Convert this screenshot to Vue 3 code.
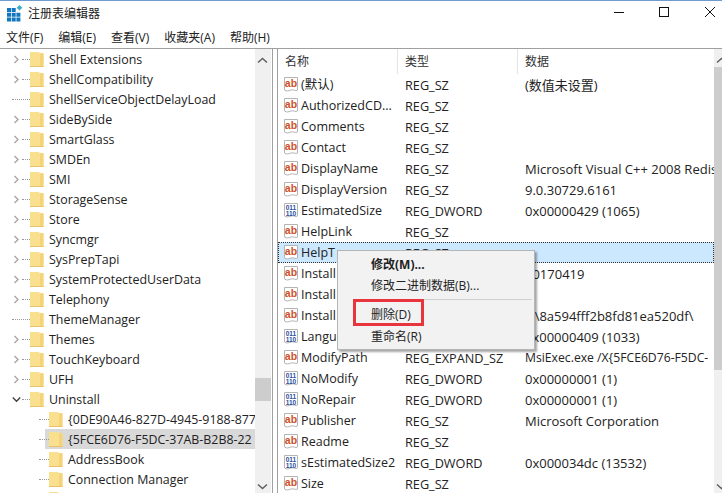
<script setup>
const menus = ['文件(F)', '编辑(E)', '查看(V)', '收藏夹(A)', '帮助(H)']
const tree = [
  { n: 'Shell Extensions', a: 'r' }, { n: 'ShellCompatibility', a: 'r' }, { n: 'ShellServiceObjectDelayLoad' },
  { n: 'SideBySide', a: 'r' }, { n: 'SmartGlass', a: 'r' }, { n: 'SMDEn', a: 'r' }, { n: 'SMI', a: 'r' },
  { n: 'StorageSense', a: 'r' }, { n: 'Store', a: 'r' }, { n: 'Syncmgr', a: 'r' }, { n: 'SysPrepTapi', a: 'r' },
  { n: 'SystemProtectedUserData', a: 'r' }, { n: 'Telephony', a: 'r' }, { n: 'ThemeManager' }, { n: 'Themes', a: 'r' },
  { n: 'TouchKeyboard', a: 'r' }, { n: 'UFH', a: 'r' }, { n: 'Uninstall', a: 'd' },
  { n: '{0DE90A46-827D-4945-9188-877', c: 1 }, { n: '{5FCE6D76-F5DC-37AB-B2B8-22', c: 1, sel: 1 },
  { n: 'AddressBook', c: 1 }, { n: 'Connection Manager', c: 1 }, { n: '', c: 1 }
]
const rows = [
  ['s', '(默认)', 'REG_SZ', '(数值未设置)'], ['s', 'AuthorizedCD...', 'REG_SZ', ''], ['s', 'Comments', 'REG_SZ', ''],
  ['s', 'Contact', 'REG_SZ', ''], ['s', 'DisplayName', 'REG_SZ', 'Microsoft Visual C++ 2008 Redis'],
  ['s', 'DisplayVersion', 'REG_SZ', '9.0.30729.6161'], ['b', 'EstimatedSize', 'REG_DWORD', '0x00000429 (1065)'],
  ['s', 'HelpLink', 'REG_SZ', ''], ['s', 'HelpT', 'REG_SZ', '', 1], ['s', 'Install', 'REG_SZ', '20170419'],
  ['s', 'Install', 'REG_SZ', ''], ['s', 'Install', 'REG_SZ', 'c:\\8a594fff2b8fd81ea520df\\'],
  ['b', 'Langu', 'REG_DWORD', '0x00000409 (1033)'], ['s', 'ModifyPath', 'REG_EXPAND_SZ', 'MsiExec.exe /X{5FCE6D76-F5DC-', 0, 1],
  ['b', 'NoModify', 'REG_DWORD', '0x00000001 (1)'], ['b', 'NoRepair', 'REG_DWORD', '0x00000001 (1)'],
  ['s', 'Publisher', 'REG_SZ', 'Microsoft Corporation'], ['s', 'Readme', 'REG_SZ', ''],
  ['b', 'sEstimatedSize2', 'REG_DWORD', '0x000034dc (13532)'], ['s', 'Size', 'REG_SZ', '']
]
</script>

<template>
  <div class="win">
    <header class="title">
      <svg class="logo" width="16" height="18" viewBox="0 0 16 18">
        <path d="M0 4h4v4H0zM4.700 4h4v4h-4zM0 8.700h4v4H0zM4.700 8.700h4v4h-4zM0 13.400h4v4H0zM4.700 13.400h4v4h-4zM9.400 8.700h4v4h-4zM9.400 13.400h4v4h-4z" fill="#1177c0" />
        <path d="M12.500 1l2.800 2.800-2.800 2.800-2.800-2.800z" fill="#3fa9c9" />
      </svg>
      <span class="title-text">注册表编辑器</span>
      <div class="caption">
        <svg width="12" height="12" viewBox="0 0 12 12"><path d="M1 6.500h10" stroke="#111" fill="none" /></svg>
        <svg width="12" height="12" viewBox="0 0 12 12"><rect x="1.500" y="1.500" width="9" height="9" stroke="#111" fill="none" /></svg>
        <svg width="12" height="12" viewBox="0 0 12 12"><path d="M1 1l10 10M11 1L1 11" stroke="#111" fill="none" /></svg>
      </div>
    </header>
    <nav class="menu"><span v-for="m in menus" :key="m">{{ m }}</span></nav>
    <div class="panes">
      <aside class="tree-pane">
        <div class="tree">
          <div v-for="(t, i) in tree" :key="i" class="node" :class="{ child: t.c, sel: t.sel }">
            <svg v-if="t.a" class="arrow" width="9" height="9" viewBox="0 0 9 9">
              <path v-if="t.a === 'r'" d="M2.500 1l3.500 3.500L2.500 8" stroke="#a6a6a6" stroke-width="1.400" fill="none" />
              <path v-else d="M.8 2.500l3.700 3.700 3.700-3.700" stroke="#404040" stroke-width="1.400" fill="none" />
            </svg>
            <span class="dots" :class="{ full: !t.a }"></span>
            <svg class="folder" width="14" height="17" viewBox="0 0 14 17">
              <path d="M0 1h9l.8 1.200H13.500V16H0z" fill="#f9e08e" />
              <path d="M10 2.200h3.500V16H10z" fill="#f6d278" />
              <path d="M0 15.500h13.500" stroke="#e9c26a" />
            </svg>
            <span class="name">{{ t.n }}</span>
          </div>
        </div>
        <div class="vbar wide">
          <svg class="up" width="11" height="7" viewBox="0 0 11 7"><path d="M1 5.500l4.500-4 4.500 4" stroke="#606060" stroke-width="1.500" fill="none" /></svg>
          <span class="thumb"></span>
          <svg class="down" width="11" height="7" viewBox="0 0 11 7"><path d="M1 1.500l4.500 4 4.500-4" stroke="#606060" stroke-width="1.500" fill="none" /></svg>
        </div>
      </aside>
      <section class="list-pane">
        <div class="list">
          <div class="head"><span class="c1">名称</span><span class="c2">类型</span><span class="c3">数据</span></div>
          <div v-for="(r, i) in rows" :key="i" class="row" :class="{ focus: r[4] }">
            <svg v-if="r[0] === 's'" class="ico" width="16" height="17" viewBox="0 0 16 17">
              <path d="M1.500 1.500h13v12.500c-2 1.500-4-1-6.500 0s-4.500 1.500-6.500 0z" fill="#fff" stroke="#b4b4b4" />
              <text x="8" y="10.500" text-anchor="middle" class="ab">ab</text>
            </svg>
            <svg v-else class="ico" width="16" height="17" viewBox="0 0 16 17">
              <path d="M1.500 1.500h13v12.500c-2 1.500-4-1-6.500 0s-4.500 1.500-6.500 0z" fill="#fff" stroke="#b4b4b4" />
              <text x="8" y="7.500" text-anchor="middle" class="bin">011</text>
              <text x="8" y="13.500" text-anchor="middle" class="bin">110</text>
            </svg>
            <span class="n">{{ r[1] }}</span><span class="t">{{ r[2] }}</span><span class="d" :class="{ tight: r[5] }">{{ r[3] }}</span>
          </div>
        </div>
        <div class="vbar narrow">
          <svg class="up" width="11" height="7" viewBox="0 0 11 7"><path d="M1 5.500l4.500-4 4.500 4" stroke="#606060" stroke-width="1.500" fill="none" /></svg>
          <span class="thumb"></span>
          <svg class="down" width="11" height="7" viewBox="0 0 11 7"><path d="M1 1.500l4.500 4 4.500-4" stroke="#606060" stroke-width="1.500" fill="none" /></svg>
        </div>
        <div class="ctx">
          <div class="item strong">修改(M)...</div>
          <div class="item">修改二进制数据(B)...</div>
          <div class="sep"></div>
          <div class="item del">删除(D)</div>
          <div class="item">重命名(R)</div>
        </div>
      </section>
    </div>
  </div>
</template>

<style>
html, body { margin: 0; background: #fff; }
</style>

<style scoped>
.win { width: 722px; height: 493px; overflow: hidden; display: flex; flex-direction: column; background: #fff; color: #222; font: 13px/20px "Open Sans", "Noto Sans CJK SC", sans-serif; position: relative; }
.title { height: 27px; flex: none; border-top: 1px solid #6f9bcf; display: flex; align-items: center; padding-left: 7px; }
.logo { margin-right: 5px; margin-top: -3px; }
.title-text { font-size: 12px; color: #222; margin-top: -1px; }
.caption { margin-left: auto; display: flex; gap: 33px; padding-right: 6px; margin-top: -5px; }
.caption svg:last-child { margin-left: 1px; }
.menu { height: 20px; flex: none; display: flex; gap: 15px; padding-left: 6px; font-size: 12px; border-bottom: 1px solid #a0a0a0; }
.panes { flex: 1; min-height: 0; display: flex; gap: 4px; }
.tree-pane { width: 273px; flex: none; display: flex; border-right: 1px solid #a0a0a0; box-sizing: border-box; overflow: hidden; }
.tree { flex: 1; overflow: hidden; min-width: 0; font-size: 12.4px; }
.node { height: 20px; display: flex; align-items: center; padding-left: 12px; position: relative; white-space: nowrap; overflow: hidden; }
.node.child { padding-left: 30px; }
.arrow { flex: none; margin-right: 1px; }
.dots { width: 8px; height: 0; flex: none; border-top: 1px dotted #999; }
.dots.full { width: 18px; }
.folder { flex: none; margin-right: 5px; }
.name { padding-top: 2px; }
.node.child .dots { width: 10px; margin-left: 9px; }
.node.sel::before { content: ""; position: absolute; left: 45px; right: 0; top: 0; bottom: 0; background: #d9d9d9; }
.node > * { position: relative; }
.vbar { flex: none; background: #f0f0f0; position: relative; }
.vbar.wide { width: 16px; margin-right: 1px; }
.vbar .up { position: absolute; left: 2px; top: 8px; }
.vbar .down { position: absolute; left: 2px; bottom: 3px; }
.vbar.wide .thumb { position: absolute; left: 0; right: 0; top: 329px; height: 23px; background: #cdcdcd; }
.list-pane { flex: 1; min-width: 0; display: flex; position: relative; border-left: 1px solid #a0a0a0; overflow: hidden; }
.list { flex: 1; min-width: 0; overflow: hidden; }
.head { height: 25px; display: flex; align-items: flex-start; font-size: 12px; }
.head span { height: 100%; line-height: 25px; box-sizing: border-box; border-right: 1px solid #e5e5e5; padding-left: 7px; color: #333; }
.c1 { width: 120px; }
.c2 { width: 120px; }
.c3 { flex: 1; border-right: none !important; }
.row { height: 21px; display: flex; align-items: center; white-space: nowrap; box-sizing: border-box; padding-left: 5px; position: relative; }
.row.focus { background: #cce8ff; outline: 1px dotted #333; outline-offset: -1px; }
.ico { flex: none; margin-right: 2px; }
.ab { font: bold 10.500px "Liberation Sans", sans-serif; fill: #d0502a; }
.bin { font: bold 6.500px "Liberation Sans", sans-serif; fill: #2a4ea0; }
.n { width: 103px; flex: none; overflow: hidden; font-size: 12.5px; }
.t { width: 121px; flex: none; padding-left: 1px; box-sizing: border-box; font-size: 12.7px; }
.d.tight { font-size: 12.2px; }
.vbar.narrow { width: 8px; }
.vbar.narrow .thumb { position: absolute; left: 0; right: 0; top: 18px; height: 303px; background: #cdcdcd; }
.ctx { position: absolute; left: 59px; top: 201px; width: 198px; height: 100px; box-sizing: border-box; background: #f2f2f2; border: 1px solid #b5b5b5; box-shadow: 2px 2px 2px rgba(0,0,0,.35); padding-top: 3px; font-size: 12px; }
.item { height: 21px; line-height: 21px; padding-left: 33px; position: relative; }
.strong { font-weight: 700; }
.sep { height: 1px; background: #d0d0d0; margin: 3px 2px 4px 26px; }
.del, .del + .item { height: 22px; line-height: 22px; }
.del::after { content: ""; position: absolute; left: 15px; top: -5px; width: 71px; height: 27px; box-sizing: border-box; border: 3px solid #e8343c; }
</style>
